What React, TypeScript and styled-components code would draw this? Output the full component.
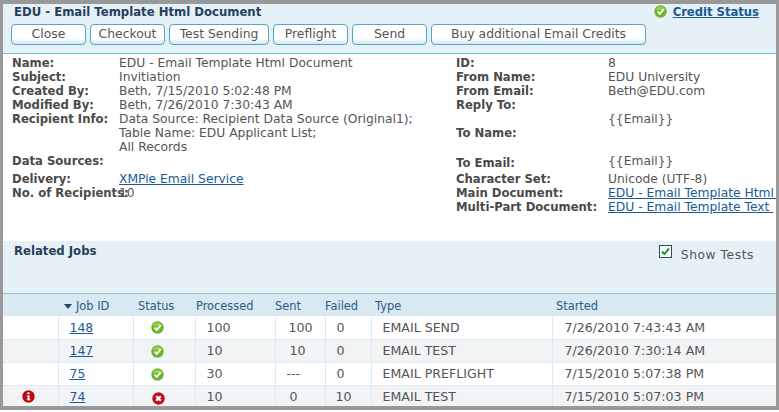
import React from 'react';
import styled, { createGlobalStyle } from 'styled-components';

const GlobalStyle = createGlobalStyle`
  html, body {
    margin: 0;
    padding: 0;
    background: #fff;
  }
  body {
    font-family: "DejaVu Sans", Verdana, sans-serif;
    font-size: 12.3px;
    color: #555;
  }
`;

const Frame = styled.div`
  width: 773px;
  height: 402px;
  margin-right: 3px;
  border: solid #999;
  border-width: 4px 3px 4px 3px;
  overflow: hidden;
  background: #fff;
`;

const Header = styled.header`
  height: 50px;
  box-sizing: border-box;
  background: #e6f1f7;
  border-bottom: 1px solid #6cc3d6;
  padding-left: 8px;
`;

const TitleRow = styled.div`
  display: flex;
  justify-content: space-between;
  box-sizing: border-box;
  height: 20px;
  padding: 0 17px 5px 3px;
  align-items: center;
`;

const Title = styled.h1`
  margin: 0;
  font-size: 11.7px;
  font-weight: bold;
  color: #27405a;
`;

const CreditStatus = styled.div`
  display: flex;
  align-items: center;
  gap: 6px;
`;

const CreditLink = styled.a`
  font-size: 11.6px;
  font-weight: bold;
  color: #1a5a96;
  text-decoration: underline;
`;

const Toolbar = styled.div`
  display: flex;
  gap: 4px;
`;

const Button = styled.button<{ $w: number }>`
  width: ${(p) => p.$w}px;
  height: 21px;
  box-sizing: border-box;
  padding: 0 0 2px;
  border: 1px solid #4fa9c4;
  border-radius: 4px;
  background: linear-gradient(#fff 0, #fff 70%, #d3e6ee 100%);
  font-family: inherit;
  font-size: 12.4px;
  color: #555;
`;

const Details = styled.section`
  height: 187px;
  box-sizing: border-box;
  display: flex;
  padding: 2px 0 0 9px;
  line-height: 14px;
`;

const DetailColumn = styled.div<{ $w: number }>`
  width: ${(p) => p.$w}px;
  flex: none;
`;

const DetailRow = styled.div<{ $labelW: number; $h?: number }>`
  display: grid;
  grid-template-columns: ${(p) => p.$labelW}px minmax(0, 1fr);
  ${(p) => (p.$h ? `height: ${p.$h}px;` : '')}
`;

const Label = styled.span`
  font-size: 11.65px;
  font-weight: bold;
  color: #4a4a4a;
  white-space: nowrap;
`;

const Value = styled.span<{ $up?: number }>`
  ${(p) => (p.$up ? `margin-top: -${p.$up}px;` : '')}
  white-space: pre;
`;

const TextLink = styled.a`
  color: #1a5a96;
  text-decoration: underline;
`;

const RelatedHeader = styled.div`
  height: 53px;
  box-sizing: border-box;
  background: #e6f1f7;
  border-bottom: 1px solid #8fc4d4;
  display: flex;
  justify-content: space-between;
  padding: 2px 22px 0 11px;
`;

const RelatedTitle = styled.h2`
  margin: 1px 0 0;
  font-size: 11.7px;
  font-weight: bold;
  color: #27405a;
  line-height: 14px;
`;

const ShowTests = styled.label`
  display: flex;
  gap: 9px;
  align-items: flex-start;
  letter-spacing: 0.55px;
  line-height: 14px;
  padding-top: 5px;
`;

const CheckBox = styled.span`
  width: 13px;
  height: 13px;
  margin-top: -3px;
  box-sizing: border-box;
  border: 1px solid #2d4a60;
  background: #fff;
  display: flex;
  align-items: center;
  justify-content: center;
`;

const JobsTable = styled.table`
  width: 773px;
  table-layout: fixed;
  border-collapse: collapse;
`;

const HeadCell = styled.th<{ $w: number; $pad?: number }>`
  box-sizing: border-box;
  width: ${(p) => p.$w}px;
  height: 22px;
  padding: 2px 0 0 ${(p) => p.$pad ?? 0}px;
  background: #d9e9f1;
  font-weight: normal;
  text-align: left;
  color: #2a5a8a;
  font-size: 11.4px;
  white-space: nowrap;
`;

const JobRow = styled.tr<{ $alt: boolean }>`
  height: 23px;
  background: ${(p) => (p.$alt ? '#f1f3f5' : '#fff')};
`;

const Cell = styled.td<{ $pad?: number }>`
  box-sizing: border-box;
  padding: 0 0 0 ${(p) => p.$pad ?? 0}px;
  border: 1px solid #dcebf3;
  border-top: 0;
  font-size: 12.6px;
  white-space: nowrap;
  &:first-child {
    border-left: 0;
  }
  &:last-child {
    border-right: 0;
  }
`;

const JobLink = styled(TextLink)`
  font-size: 12.4px;
`;

const SortArrow = styled.span`
  display: inline-block;
  width: 0;
  height: 0;
  margin-right: 4px;
  vertical-align: 1px;
  border: 4px solid transparent;
  border-top: 5px solid #24476b;
  border-bottom: 0;
`;

const StatusIcon = styled.svg<{ $down?: number }>`
  display: block;
  margin-top: ${(p) => p.$down ?? 0}px;
`;

const OkIcon = ({ down }: { down?: number }) => (
  <StatusIcon $down={down} width="13" height="13" viewBox="0 0 13 13">
    <circle cx="6.5" cy="6.5" r="6.2" fill="#6db52d" />
    <path d="M1.5 5a5.4 5.4 0 0 1 10 0z" fill="#9ad04f" />
    <path d="M3.6 6.6l2.2 2.3 3.8-4.6" fill="none" stroke="#fff" strokeWidth="1.9" />
  </StatusIcon>
);

const FailIcon = () => (
  <StatusIcon $down={3} width="13" height="13" viewBox="0 0 13 13">
    <circle cx="6.5" cy="6.5" r="6.2" fill="#c2101a" />
    <path d="M4.2 4.2l4.6 4.6M8.8 4.2l-4.6 4.6" stroke="#fff" strokeWidth="2.2" />
  </StatusIcon>
);

const AlertIcon = () => (
  <StatusIcon width="13" height="13" viewBox="0 0 13 13">
    <circle cx="6.5" cy="6.5" r="6.2" fill="#b80d14" />
    <rect x="5.5" y="2.3" width="2" height="2" fill="#fff" />
    <path d="M4.8 5.4h2.7v3.8h.9v1H4.8v-1h.8V6.4h-.8z" fill="#fff" />
  </StatusIcon>
);

interface Job {
  id: number;
  ok: boolean;
  processed: string;
  sent: string;
  sentPad: number;
  failed: string;
  failedPad: number;
  type: string;
  started: string;
}

const jobs: Job[] = [
  { id: 148, ok: true, processed: '100', sent: '100', sentPad: 13, failed: '0', failedPad: 11, type: 'EMAIL SEND', started: '7/26/2010 7:43:43 AM' },
  { id: 147, ok: true, processed: '10', sent: '10', sentPad: 14, failed: '0', failedPad: 11, type: 'EMAIL TEST', started: '7/26/2010 7:30:14 AM' },
  { id: 75, ok: true, processed: '30', sent: '---', sentPad: 11, failed: '0', failedPad: 11, type: 'EMAIL PREFLIGHT', started: '7/15/2010 5:07:38 PM' },
  { id: 74, ok: false, processed: '10', sent: '0', sentPad: 14, failed: '10', failedPad: 10, type: 'EMAIL TEST', started: '7/15/2010 5:07:03 PM' },
];

const buttons: [string, number][] = [
  ['Close', 75],
  ['Checkout', 75],
  ['Test Sending', 100],
  ['Preflight', 75],
  ['Send', 75],
  ['Buy additional Email Credits', 215],
];

const App: React.FC = () => (
  <>
    <GlobalStyle />
    <Frame>
      <Header>
        <TitleRow>
          <Title>EDU - Email Template Html Document</Title>
          <CreditStatus>
            <OkIcon />
            <CreditLink>Credit Status</CreditLink>
          </CreditStatus>
        </TitleRow>
        <Toolbar>
          {buttons.map(([text, w]) => (
            <Button key={text} $w={w}>{text}</Button>
          ))}
        </Toolbar>
      </Header>

      <Details>
        <DetailColumn $w={444}>
          <DetailRow $labelW={107}><Label>Name:</Label><Value>EDU - Email Template Html Document</Value></DetailRow>
          <DetailRow $labelW={107}><Label>Subject:</Label><Value>Invitiation</Value></DetailRow>
          <DetailRow $labelW={107}><Label>Created By:</Label><Value>Beth, 7/15/2010 5:02:48 PM</Value></DetailRow>
          <DetailRow $labelW={107}><Label>Modified By:</Label><Value>Beth, 7/26/2010 7:30:43 AM</Value></DetailRow>
          <DetailRow $labelW={107}>
            <Label>Recipient Info:</Label>
            <Value>{'Data Source: Recipient Data Source (Original1);\nTable Name: EDU Applicant List;\nAll Records'}</Value>
          </DetailRow>
          <DetailRow $labelW={107} $h={18}><Label>Data Sources:</Label><Value /></DetailRow>
          <DetailRow $labelW={107}><Label>Delivery:</Label><Value><TextLink>XMPie Email Service</TextLink></Value></DetailRow>
          <DetailRow $labelW={107}><Label>No. of Recipients:</Label><Value>10</Value></DetailRow>
        </DetailColumn>
        <DetailColumn $w={320}>
          <DetailRow $labelW={152}><Label>ID:</Label><Value>8</Value></DetailRow>
          <DetailRow $labelW={152}><Label>From Name:</Label><Value>EDU University</Value></DetailRow>
          <DetailRow $labelW={152}><Label>From Email:</Label><Value>Beth@EDU.com</Value></DetailRow>
          <DetailRow $labelW={152}><Label>Reply To:</Label><Value /></DetailRow>
          <DetailRow $labelW={152}><Label /><Value>{'{{Email}}'}</Value></DetailRow>
          <DetailRow $labelW={152} $h={30}><Label>To Name:</Label><Value /></DetailRow>
          <DetailRow $labelW={152} $h={16}><Label>To Email:</Label><Value $up={2}>{'{{Email}}'}</Value></DetailRow>
          <DetailRow $labelW={152}><Label>Character Set:</Label><Value>Unicode (UTF-8)</Value></DetailRow>
          <DetailRow $labelW={152}><Label>Main Document:</Label><Value><TextLink>{'EDU - Email Template Html\u00a0'}</TextLink></Value></DetailRow>
          <DetailRow $labelW={152}><Label>Multi-Part Document:</Label><Value><TextLink>{'EDU - Email Template Text\u00a0'}</TextLink></Value></DetailRow>
        </DetailColumn>
      </Details>

      <RelatedHeader>
        <RelatedTitle>Related Jobs</RelatedTitle>
        <ShowTests>
          <CheckBox>
            <svg width="9" height="9" viewBox="0 0 9 9">
              <path d="M1 4.5l2.4 2.6L8 1.5" fill="none" stroke="#1a9a2a" strokeWidth="2" />
            </svg>
          </CheckBox>
          Show Tests
        </ShowTests>
      </RelatedHeader>

      <JobsTable>
        <thead>
          <tr>
            <HeadCell $w={55} />
            <HeadCell $w={75} $pad={6}><SortArrow />Job ID</HeadCell>
            <HeadCell $w={62} $pad={5}>Status</HeadCell>
            <HeadCell $w={80} $pad={1}>Processed</HeadCell>
            <HeadCell $w={50}>Sent</HeadCell>
            <HeadCell $w={46}>Failed</HeadCell>
            <HeadCell $w={181} $pad={4}>Type</HeadCell>
            <HeadCell $w={224} $pad={4}>Started</HeadCell>
          </tr>
        </thead>
        <tbody>
          {jobs.map((job, i) => (
            <JobRow key={job.id} $alt={i % 2 === 1}>
              <Cell $pad={19}>{job.ok ? null : <AlertIcon />}</Cell>
              <Cell $pad={11}><JobLink>{job.id}</JobLink></Cell>
              <Cell $pad={job.ok ? 17 : 18}>{job.ok ? <OkIcon down={1} /> : <FailIcon />}</Cell>
              <Cell $pad={11}>{job.processed}</Cell>
              <Cell $pad={job.sentPad}>{job.sent}</Cell>
              <Cell $pad={job.failedPad}>{job.failed}</Cell>
              <Cell $pad={11}>{job.type}</Cell>
              <Cell $pad={12}>{job.started}</Cell>
            </JobRow>
          ))}
        </tbody>
      </JobsTable>
    </Frame>
  </>
);

export default App;
